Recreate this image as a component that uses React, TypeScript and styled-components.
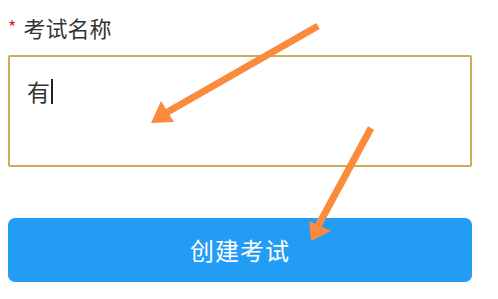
import React from 'react';
import styled, { createGlobalStyle } from 'styled-components';

const GlobalStyle = createGlobalStyle`
  html, body {
    margin: 0;
    padding: 0;
    background: #fff;
  }
  body {
    font-family: "Noto Sans CJK SC", "Noto Sans", sans-serif;
  }
`;

const Page = styled.div`
  position: relative;
  width: 498px;
  height: 299px;
  overflow: hidden;
  padding: 12px 26px 0 8px;
  box-sizing: border-box;
  display: flex;
  flex-direction: column;
`;

const Label = styled.div`
  display: flex;
  align-items: center;
  height: 30px;
  font-size: 22px;
  color: #333;
  gap: 7px;
`;

const Star = styled.span`
  color: #d9262c;
  font-size: 18px;
  margin-top: -2px;
`;

const InputBox = styled.div`
  margin-top: 13px;
  height: 112px;
  border: 2px solid #d2ab58;
  border-radius: 2px;
  box-sizing: border-box;
  padding: 17px 17px;
  font-size: 23px;
  color: #333;
  display: flex;
  align-items: flex-start;
`;

const Caret = styled.span`
  display: inline-block;
  width: 1.5px;
  height: 25px;
  background: #222;
  margin-left: 1px;
  margin-top: 5px;
`;

const Button = styled.button`
  margin-top: 51px;
  height: 64px;
  border: none;
  border-radius: 7px;
  background: #229cf5;
  color: #fff;
  font-family: "Noto Sans CJK SC", "Noto Sans", sans-serif;
  font-size: 24px;
  letter-spacing: 1px;
  display: flex;
  align-items: center;
  justify-content: center;
  padding: 0 0 2px;
`;

const Overlay = styled.svg`
  position: absolute;
  left: 0;
  top: 0;
  pointer-events: none;
`;

const orange = '#fb8b3c';

const App = () => (
  <>
    <GlobalStyle />
    <Page>
      <Label>
        <Star>*</Star>
        <span>考试名称</span>
      </Label>
      <InputBox>
        <span>有</span>
        <Caret />
      </InputBox>
      <Button>创建考试</Button>
      <Overlay width="498" height="299" viewBox="0 0 498 299">
        <line x1="318" y1="26" x2="164" y2="114" stroke={orange} strokeWidth="7" strokeLinecap="butt" />
        <polygon points="151,123 161,101 174,122" fill={orange} />
        <line x1="371" y1="128" x2="318" y2="226" stroke={orange} strokeWidth="7" strokeLinecap="butt" />
        <polygon points="311,241 309,221 331,231" fill={orange} />
      </Overlay>
    </Page>
  </>
);

export default App;
